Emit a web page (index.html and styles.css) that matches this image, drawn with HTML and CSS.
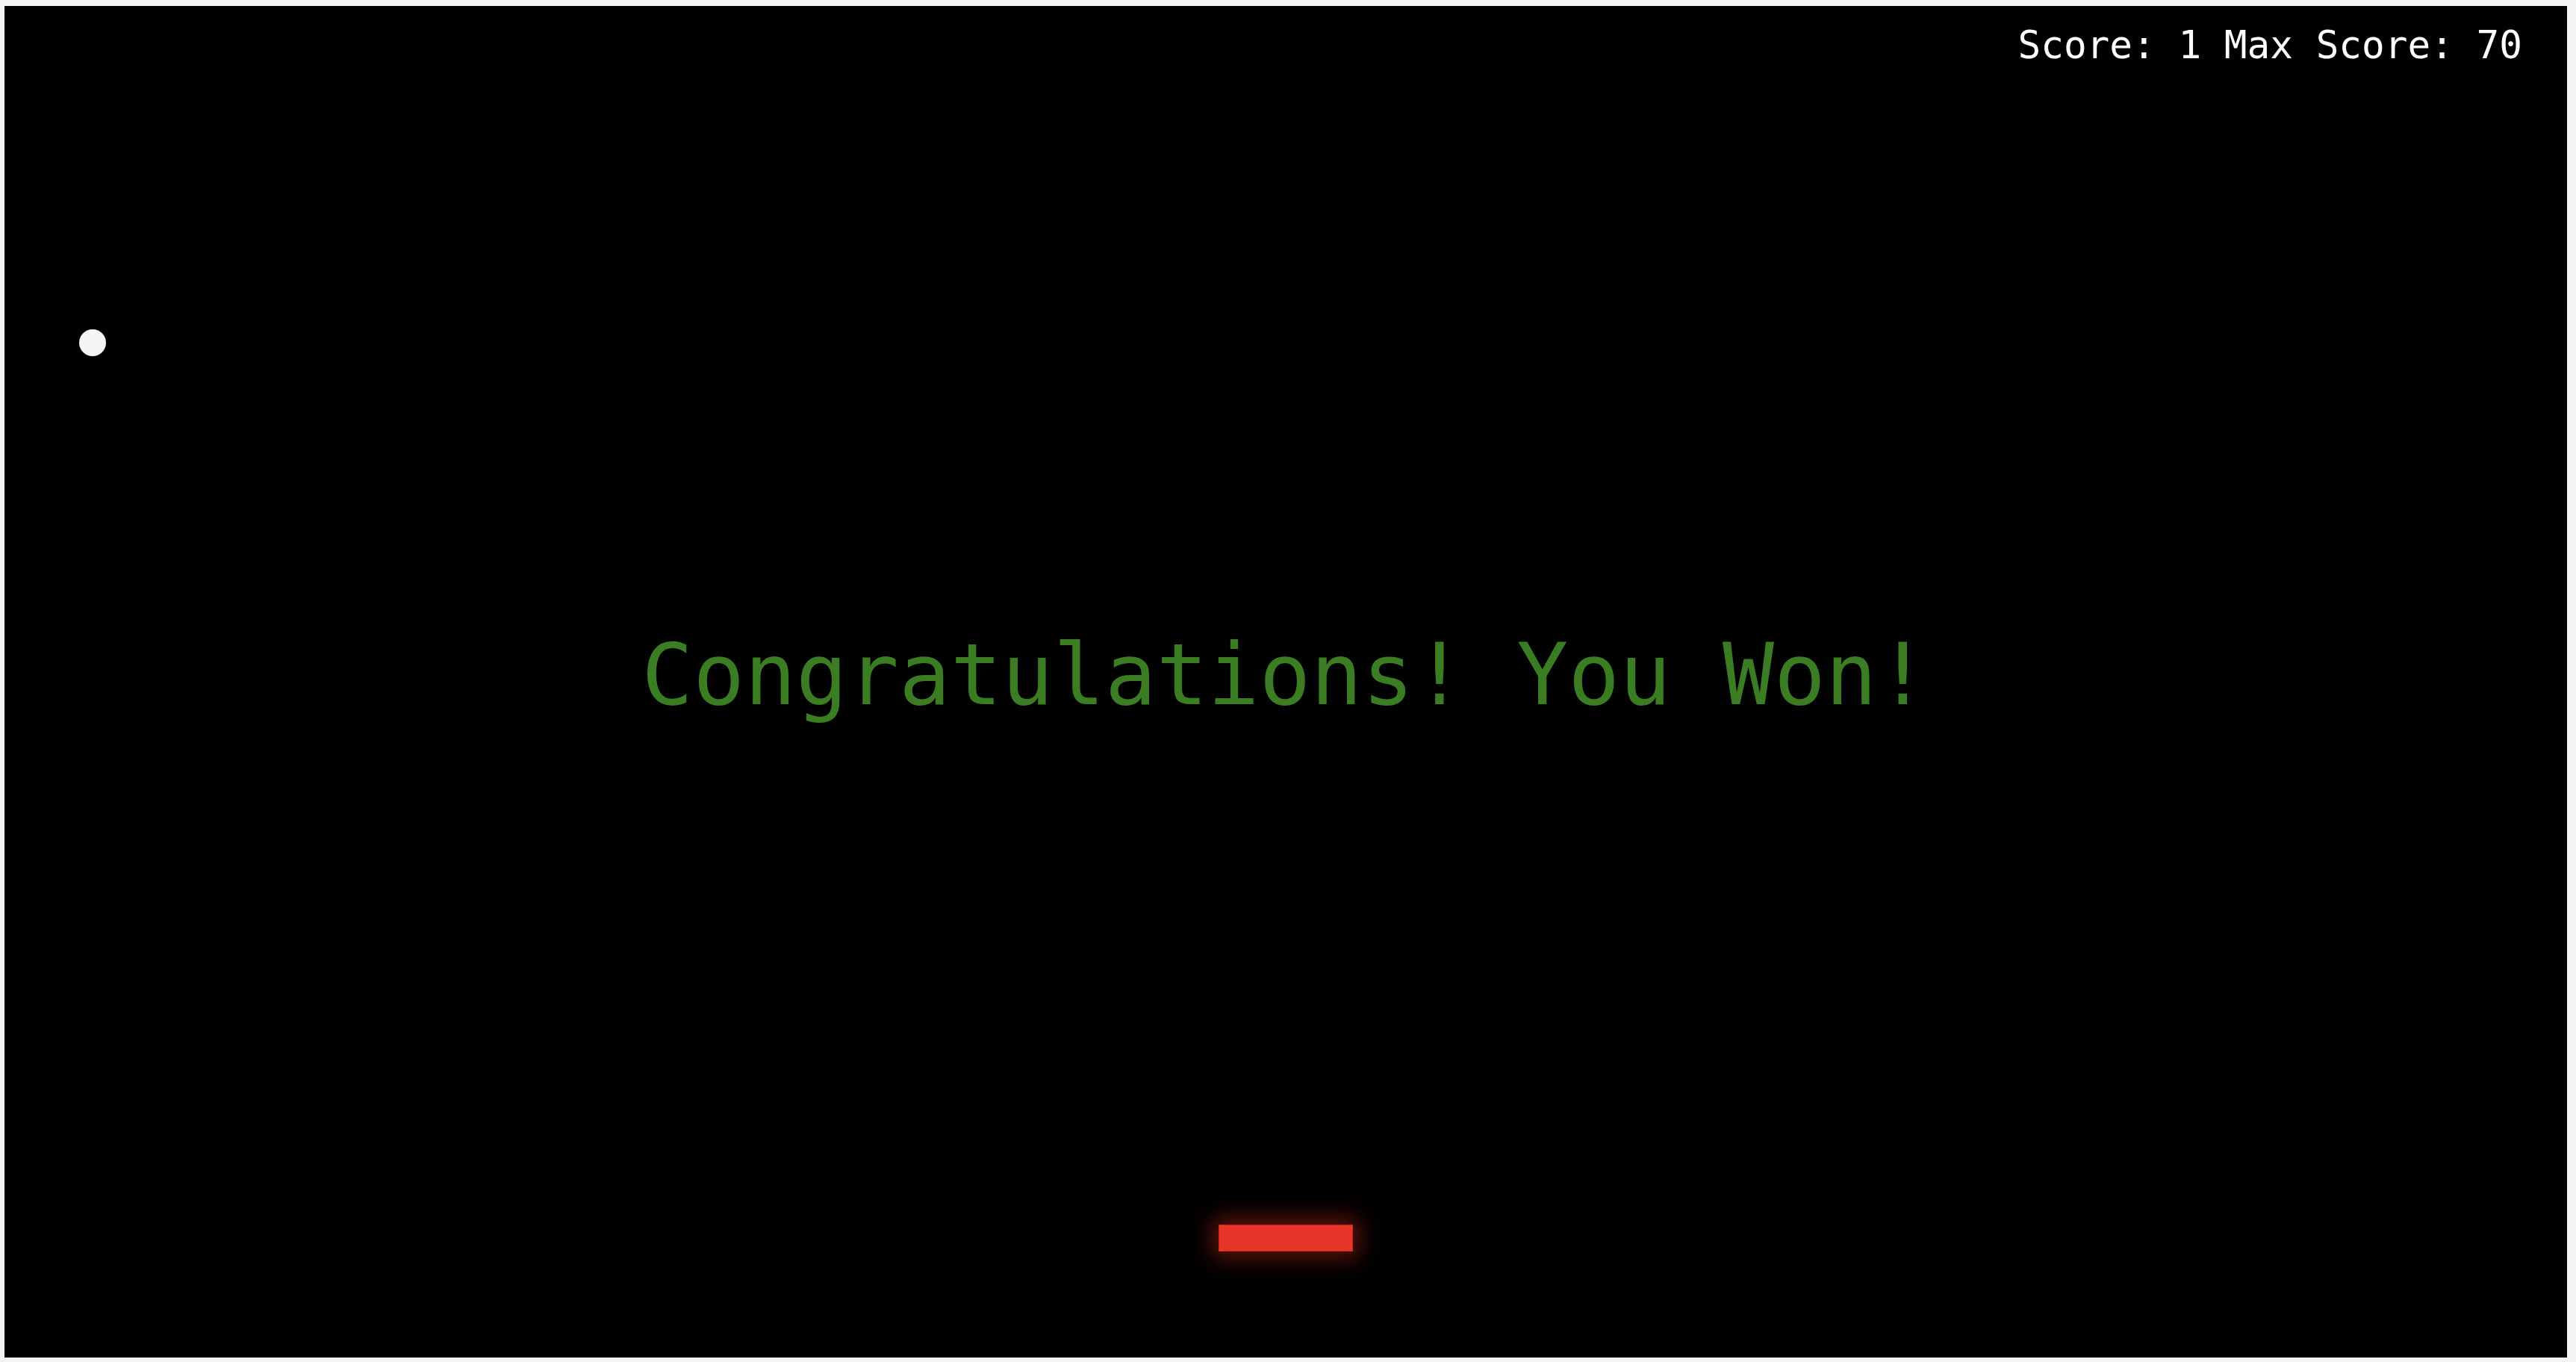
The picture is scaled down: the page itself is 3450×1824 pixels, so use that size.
FILE: index.html
```html
<!DOCTYPE html>
<html lang="en">
<head>
<meta charset="utf-8">
<title>Breakout</title>
<link rel="stylesheet" href="styles.css">
</head>
<body>
<div class="game">
  <div class="score">Score: 1 Max Score: 70</div>
  <div class="message">Congratulations! You Won!</div>
  <div class="ball"></div>
  <div class="paddle"></div>
</div>
</body>
</html>
```

FILE: styles.css
```css
html, body {
  margin: 0;
  padding: 0;
  background: #f4f4f4;
}
body {
  padding: 8px 12px 6px 6px;
  width: 3450px;
  height: 1824px;
  box-sizing: border-box;
  overflow: hidden;
}
.game {
  position: relative;
  width: 3432px;
  height: 1810px;
  background: #000;
  display: flex;
  flex-direction: column;
  font-family: "DejaVu Sans Mono", monospace;
}
.score {
  color: #ffffff;
  font-size: 51px;
  line-height: normal;
  text-align: right;
  padding: 23px 60px 0 0;
}
.message {
  color: #3a7d22;
  font-size: 114.5px;
  line-height: normal;
  text-align: center;
  margin-top: 747px;
  padding-right: 2px;
}
.ball {
  position: absolute;
  left: 100px;
  top: 433px;
  width: 36px;
  height: 36px;
  border-radius: 50%;
  background: #f5f5f5;
}
.paddle {
  position: absolute;
  left: 1626px;
  top: 1632px;
  width: 180px;
  height: 36px;
  box-sizing: border-box;
  background: #e8352a;
  border: 1px solid #c22b20;
  box-shadow: 0 0 30px 8px rgba(200, 40, 25, 0.5);
}
```
